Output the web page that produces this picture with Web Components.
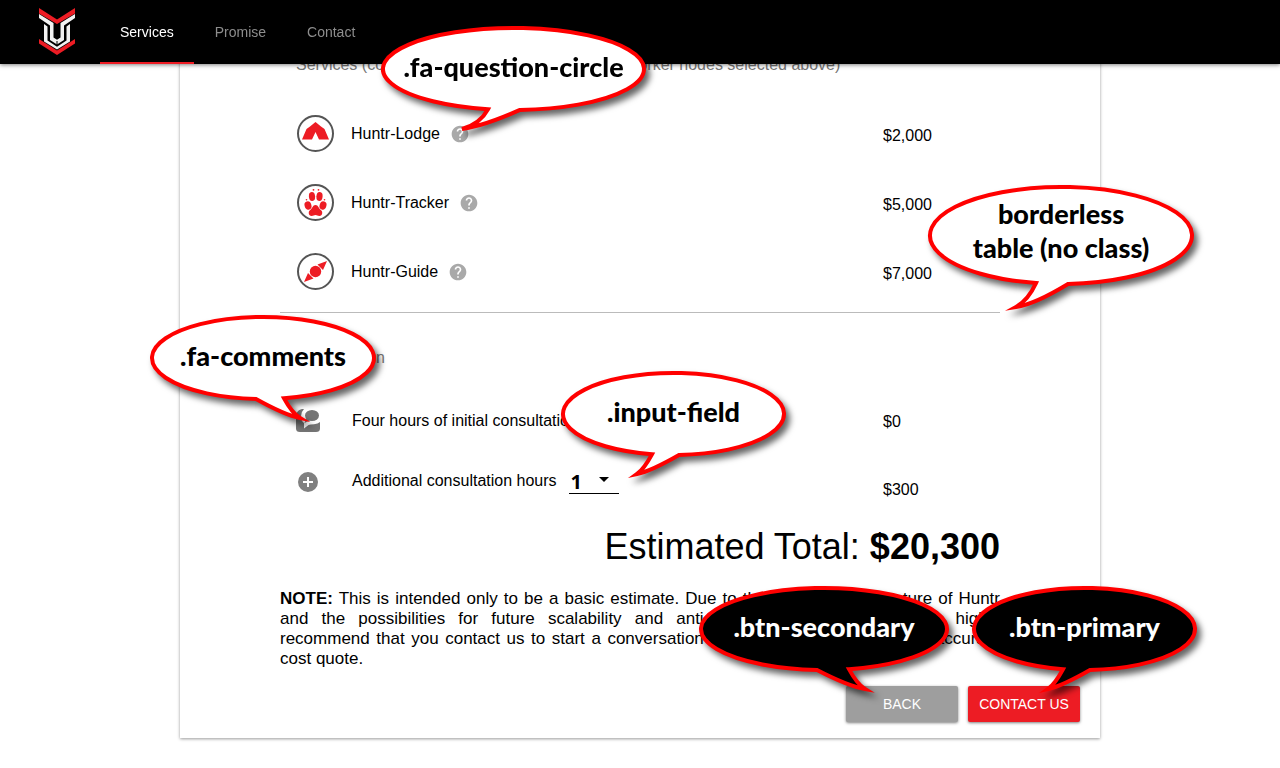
<!DOCTYPE html>
<html lang="en">
<head>
<meta charset="utf-8">
<title>Huntr services estimate</title>
<style>
body{margin:0;background:#fff;color:#000;font-family:"Liberation Sans",Arial,sans-serif;font-size:16px}
</style>
</head>
<body>
<site-header></site-header>
<estimate-card>
  <estimate-section heading="Services (costs depend on the total number of worker nodes selected above)" kind="services"></estimate-section>
  <estimate-section heading="Consultation" kind="consultation"></estimate-section>
  <estimate-total amount="$20,300"></estimate-total>
  <estimate-note></estimate-note>
  <action-button slot="actions" tone="secondary">BACK</action-button>
  <action-button slot="actions" tone="primary">CONTACT US</action-button>
  <callout-bubble slot="notes" style="left:201px;top:26px" w="265" h="86" tail="139 107 73" drop="20">.fa-question-circle</callout-bubble>
  <callout-bubble slot="notes" style="left:748px;top:185px;padding-bottom:10px" w="266" h="101" tail="140 108 80" drop="24">borderless<br>table (no class)</callout-bubble>
  <callout-bubble slot="notes" style="left:-30px;top:315px" w="226" h="86" tail="106 134 158" drop="20">.fa-comments</callout-bubble>
  <callout-bubble slot="notes" style="left:381px;top:371px" w="225" h="86" tail="118 91 68" drop="20">.input-field</callout-bubble>
  <callout-bubble slot="notes" dark style="left:519px;top:586px" w="250" h="86" tail="118 150 174" drop="20">.btn-secondary</callout-bubble>
  <callout-bubble slot="notes" dark style="left:792px;top:586px" w="225" h="86" tail="118 91 68" drop="20">.btn-primary</callout-bubble>
</estimate-card>

<script>
function define(name, html) {
  customElements.define(name, class extends HTMLElement {
    constructor() {
      super();
      this.attachShadow({mode: 'open'});
    }
    connectedCallback() {
      this.shadowRoot.innerHTML = typeof html === 'function' ? html(this) : html;
    }
  });
}

define('site-header', `
<style>
:host{display:block;position:fixed;inset:0 0 auto 0;z-index:1;height:64px;background:#000;box-shadow:0 1px 4px rgba(0,0,0,.5)}
header{display:flex;height:100%;padding-left:38px}
.logo{display:flex;align-items:center;width:62px}
nav{display:flex;gap:1px}
nav a{box-sizing:border-box;padding:0 20px;line-height:64px;height:64px;font-size:14px;color:#8d8d8d;text-decoration:none}
nav a[aria-current]{color:#fff;border-bottom:2px solid #ed1c24}
</style>
<header>
<a class="logo" href="#home" aria-label="Huntr home"><svg width="38" height="64" viewBox="38 0 38 64">
<path fill="#ed1c24" d="M39 8l18 11.500 18-11.500v5.500L57 24 39 13.500zM39 39l18 11.500L75 39v4.500L57 55 39 43.500z"/>
<path fill="#f2f2f2" d="M39 14l14.500 9v14.500l3.500 2.300 3.500-2.300V23L75 14v4l-11 7.500V40l-7 4.500-7-4.500V25.500L39 18z"/>
<path fill="#f2f2f2" d="M44 24l3.500 2.500v14L57 46.700l9.500-6.200v-14L70 24v17.500L57 49.500 44 41.500z"/>
<path stroke="#000" d="M57 41v4"/>
</svg></a>
<nav><a href="#services" aria-current="page">Services</a><a href="#promise">Promise</a><a href="#contact">Contact</a></nav>
</header>`);

define('estimate-card', `
<style>
:host{display:block;position:relative;box-sizing:border-box;width:calc(100% - 40px);max-width:920px;margin:0 auto 30px;padding:30px 20px 16px;background:#fff;box-shadow:0 1px 3px rgba(0,0,0,.4)}
.body{padding:0 80px}
.actions{display:flex;justify-content:flex-end;gap:10px;margin-top:17px}
</style>
<div class="body"><slot></slot></div>
<div class="actions"><slot name="actions"></slot></div>
<slot name="notes"></slot>`);

define('service-icon', el => {
  const art = {
    lodge: '<path d="M18.500 7l-5.500 4.500-3.500 2.500L5 24.500h10l3.500-7.500 3.500 7.500h10L27.500 14 24 11.500z"/>',
    tracker: '<ellipse cx="15" cy="12.500" rx="3.100" ry="4.500" transform="rotate(-5 15 12.500)"/><ellipse cx="22.500" cy="12.500" rx="3.100" ry="4.500" transform="rotate(5 22.500 12.500)"/><ellipse cx="11" cy="21.500" rx="3.400" ry="4.200" transform="rotate(-18 11 21.500)"/><ellipse cx="26" cy="21.500" rx="3.400" ry="4.200" transform="rotate(18 26 21.500)"/><path d="M18.500 21c-3 0-3 3.500-5.300 5-2.400 1.500-1.700 6 1.300 6 2 0 2.500-1 4-1s2 1 4 1c3 0 3.700-4.500 1.300-6-2.300-1.500-2.300-5-5.300-5z"/><circle cx="16.500" cy="5.800" r=".9"/><circle cx="21.500" cy="5.800" r=".9"/><circle cx="9.500" cy="15.800" r=".8"/><circle cx="27.500" cy="15.800" r=".8"/>',
    guide: '<path d="M30 8L20.500 11.500l5.500 5.500zM7 29l9.500-3.500-5.500-5.500z"/><circle cx="18.500" cy="18.500" r="5.700"/>'
  };
  return `<style>:host{display:block;height:39px}svg{display:block;width:37px;height:37px}</style>
<svg viewBox="0 0 37 37" aria-hidden="true"><circle cx="18.500" cy="18.500" r="17.500" fill="#fff" stroke="#555" stroke-width="2"/><g fill="#ed1c24">${art[el.getAttribute('name')]}</g></svg>`;
});

define('help-mark', `
<style>:host{display:inline-block;margin:0 0 2px 10px;vertical-align:middle}svg{display:block}</style>
<svg width="20" height="20" viewBox="0 0 24 24" fill="#a9a9a9" role="img" aria-label="Help"><path d="M12 2C6.480 2 2 6.480 2 12s4.480 10 10 10 10-4.480 10-10S17.520 2 12 2zm1 17h-2v-2h2v2zm2.070-7.750l-.9.920C13.450 12.900 13 13.500 13 15h-2v-.5c0-1.100.450-2.100 1.170-2.830l1.240-1.260c.370-.360.590-.860.590-1.410 0-1.100-.9-2-2-2s-2 .9-2 2H8c0-2.210 1.790-4 4-4s4 1.790 4 4c0 .880-.360 1.680-.930 2.250z"/></svg>`);

define('hours-select', `
<style>
:host{display:inline-block;position:relative;margin-left:12px;vertical-align:middle}
select{appearance:none;display:block;width:50px;height:24px;padding:0 0 0 2px;border:0;border-bottom:1px solid #000;border-radius:0;background:none;color:#000;font:bold 20px/23px "Noto Sans",sans-serif}
svg{position:absolute;right:10px;top:7px;pointer-events:none}
</style>
<select aria-label="Additional consultation hours"><option>1</option><option>2</option><option>3</option><option>4</option></select>
<svg width="10" height="5" viewBox="0 0 10 5"><path d="M0 0h10L5 5z"/></svg>`);

define('estimate-section', el => {
  const services = [['lodge', 'Huntr-Lodge', '$2,000'], ['tracker', 'Huntr-Tracker', '$5,000'], ['guide', 'Huntr-Guide', '$7,000']]
    .map(r => `<tr><td class="icon"><service-icon name="${r[0]}"></service-icon></td><th scope="row">${r[1]}<help-mark></help-mark></th><td class="price">${r[2]}</td></tr>`).join('');
  const consultation = `
<tr><td class="icon"><svg width="24" height="24" viewBox="0 0 24 24" fill="#757575" aria-hidden="true"><path d="M6 0C2 1 0 3.500 0 8v11.500Q0 23 4 23h16q4 0 4-3.500V13q-2 2-6 2.300-4 .2-5.500.7L8 19.500V14Q5 12 5 7q0-4 3-7z"/><ellipse cx="16" cy="6.500" rx="7" ry="5.500"/><path d="M10 9l-1.500 5 5-2.500z"/></svg></td><th scope="row">Four hours of initial consultation</th><td class="price">$0</td></tr>
<tr><td class="icon"><svg width="24" height="24" viewBox="0 0 24 24" fill="#808080" aria-hidden="true"><path d="M12 2a10 10 0 100 20 10 10 0 000-20zm5 11h-4v4h-2v-4H7v-2h4V7h2v4h4v2z"/></svg></td><th scope="row">Additional consultation hours<hours-select></hours-select></th><td class="price">$300</td></tr>`;
  const kind = el.getAttribute('kind');
  return `<style>
:host{display:block}
:host([kind=services]){padding-bottom:5px;border-bottom:1px solid #bbb}
:host([kind=consultation]){padding-top:10px}
h2{margin:0;padding-left:16px;font-size:16px;font-weight:400;line-height:70px;color:#757575;white-space:nowrap}
table{width:100%;border-collapse:collapse;table-layout:fixed}
td,th{padding:0;font-weight:400;text-align:left;vertical-align:middle}
.icon{width:56px;padding-left:16px}
.services .icon{width:54px;padding-left:17px}
.icon svg{display:block}
.price{width:117px;padding-top:2px}
.services tr{height:69px}
.consultation tr:first-child{height:56px}
.consultation tr:last-child{height:66px}
.consultation tr:last-child .price{padding-top:16px}
</style>
<h2>${el.getAttribute('heading')}</h2>
<table class="${kind}"><tbody>${kind === 'services' ? services : consultation}</tbody></table>`;
});

define('estimate-total', el => `
<style>:host{display:block;margin-top:10px;text-align:right;font-size:36px;line-height:44px}</style>
Estimated Total: <b>${el.getAttribute('amount')}</b>`);

define('estimate-note', `
<style>:host{display:block;margin-top:20px}p{margin:0;font-size:17px;line-height:20px;text-align:justify}</style>
<p><b>NOTE:</b> This is intended only to be a basic estimate. Due to the highly custom nature of Huntr and the possibilities for future scalability and anticipated business growth, we highly recommend that you contact us to start a conversation with our team to get a more accurate cost quote.</p>`);

define('action-button', `
<style>
:host{display:block}
button{display:block;width:112px;height:36px;padding:0;border:0;border-radius:2px;background:#9e9e9e;color:#fff;font:14px "Liberation Sans",Arial,sans-serif;box-shadow:0 1px 3px rgba(0,0,0,.5)}
:host([tone=primary]) button{background:#ed1c24}
</style>
<button type="button"><slot></slot></button>`);

/* Speech balloon. tail="base notch tip": x of the far base, the near notch and the tip. */
define('callout-bubble', el => {
  const w = +el.getAttribute('w'), h = +el.getAttribute('h'), drop = +el.getAttribute('drop');
  const [base, notch, tip] = el.getAttribute('tail').split(' ').map(Number);
  const rx = w / 2 - 2, ry = h / 2 - 2;
  const edge = x => h / 2 + ry * Math.sqrt(1 - ((x - w / 2) / rx) ** 2);
  const left = tip < base, s = left ? -1 : 1, tipY = h + drop - 3;
  const d = `M${base} ${edge(base)}A${rx} ${ry} 0 1 ${left ? 0 : 1} ${notch} ${edge(notch)}`
    + `Q${notch + s * 8} ${h + drop * .6} ${tip - s * 8} ${tipY}`
    + `Q${(base + tip) / 2 + s * 3} ${tipY - 3} ${base} ${edge(base)}Z`;
  return `<style>
:host{position:absolute;z-index:2;box-sizing:border-box;width:${w}px;height:${h}px;padding-bottom:4px;display:grid;place-items:center;color:#000;font:900 27px/34px Lato,sans-serif;text-align:center;white-space:nowrap;pointer-events:none}
:host([dark]){color:#fff}
svg{position:absolute;left:0;top:0;overflow:visible;filter:drop-shadow(4px 5px 3px rgba(0,0,0,.6))}
path{fill:#fff;stroke:#f00;stroke-width:4;stroke-miterlimit:8}
:host([dark]) path{fill:#000}
span{position:relative}
</style><svg width="${w}" height="${h}" aria-hidden="true"><path d="${d}"/></svg><span><slot></slot></span>`;
});
</script>
</body>
</html>
